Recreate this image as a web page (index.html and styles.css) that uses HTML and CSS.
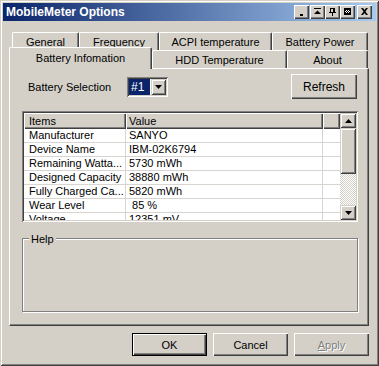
FILE: index.html
```html
<!DOCTYPE html>
<html lang="en">
<head>
  <meta charset="UTF-8">
  <title>MobileMeter Options</title>
  <link rel="stylesheet" href="styles.css">
</head>
<body>
<div class="window">
  <div class="titlebar">
    <span class="title">MobileMeter Options</span>
    <div class="caption-btns">
      <span class="cbtn"><svg width="9" height="8" viewBox="0 0 9 8"><rect x="3" y="6" width="3" height="2"/></svg></span>
      <span class="cbtn gap1"><svg width="9" height="8" viewBox="0 0 9 8"><rect x="1" y="0" width="7" height="1"/><path d="M1 6h7L4.5 2.5z"/></svg></span>
      <span class="cbtn"><svg width="9" height="8" viewBox="0 0 9 8"><path d="M2 0h5v4h-5zM3 1v3h2v-3z"/><rect x="1" y="4" width="7" height="1"/><rect x="4" y="5" width="1" height="3"/></svg></span>
      <span class="cbtn"><svg width="9" height="8" viewBox="0 0 9 8"><rect x="1" y="0" width="7" height="7"/><path d="M3 2h1v1h-1zM5 2h1v1h-1zM2 3h1v1h-1zM4 3h1v1h-1zM6 3h1v1h-1zM3 4h1v1h-1zM5 4h1v1h-1z" fill="#fff"/></svg></span>
      <span class="cbtn gap2"><svg width="9" height="8" viewBox="0 0 9 8"><path d="M1 0h2l1.5 2 1.5-2h2l-2.5 3.5 2.5 3.5h-2l-1.5-2-1.5 2h-2l2.5-3.5z"/></svg></span>
    </div>
  </div>

  <div class="client">
    <div class="tabrow back">
      <div class="tab w-general">General</div>
      <div class="tab w-freq">Frequency</div>
      <div class="tab w-acpi">ACPI temperature</div>
      <div class="tab w-power">Battery Power</div>
    </div>
    <div class="tabrow front">
      <div class="tab selected w-info">Battery Infomation</div>
      <div class="tab w-hdd">HDD Temperature</div>
      <div class="tab w-about">About</div>
    </div>

    <div class="panel">
      <div class="selrow">
        <span class="sel-label">Battery Selection</span>
        <div class="combo">
          <span class="combo-value">#1</span>
          <span class="sbtn"><svg width="7" height="4" viewBox="0 0 7 4"><path d="M0 0h7L3.5 4z"/></svg></span>
        </div>
        <button class="btn refresh">Refresh</button>
      </div>

      <div class="list">
        <div class="list-main">
          <div class="list-head">
            <div class="hcell c-items">Items</div>
            <div class="hcell c-value">Value</div>
            <div class="hcell c-fill"></div>
          </div>
          <div class="list-body">
            <div class="row"><span class="cell c-items">Manufacturer</span><span class="cell c-value">SANYO</span><span class="cell c-fill"></span></div>
            <div class="row"><span class="cell c-items">Device Name</span><span class="cell c-value">IBM-02K6794</span><span class="cell c-fill"></span></div>
            <div class="row"><span class="cell c-items">Remaining Watta...</span><span class="cell c-value">5730 mWh</span><span class="cell c-fill"></span></div>
            <div class="row"><span class="cell c-items">Designed Capacity</span><span class="cell c-value">38880 mWh</span><span class="cell c-fill"></span></div>
            <div class="row"><span class="cell c-items">Fully Charged Ca...</span><span class="cell c-value">5820 mWh</span><span class="cell c-fill"></span></div>
            <div class="row"><span class="cell c-items">Wear Level</span><span class="cell c-value"> 85 %</span><span class="cell c-fill"></span></div>
            <div class="row"><span class="cell c-items">Voltage</span><span class="cell c-value">12351 mV</span><span class="cell c-fill"></span></div>
          </div>
        </div>
        <div class="scrollbar">
          <span class="sbtn sb-end"><svg width="7" height="4" viewBox="0 0 7 4"><path d="M0 4h7L3.5 0z"/></svg></span>
          <span class="sb-thumb"></span>
          <span class="sb-track"></span>
          <span class="sbtn sb-end"><svg width="7" height="4" viewBox="0 0 7 4"><path d="M0 0h7L3.5 4z"/></svg></span>
        </div>
      </div>

      <div class="group">
        <span class="group-label">Help</span>
      </div>
    </div>

    <div class="actions">
      <button class="btn default">OK</button>
      <button class="btn">Cancel</button>
      <button class="btn disabled"><u>A</u>pply</button>
    </div>
  </div>
</div>
</body>
</html>
```

FILE: styles.css
```css
* {
  box-sizing: border-box;
}
body {
  margin: 0;
  background: #d4d0c8;
  font-family: "Liberation Sans", Arial, sans-serif;
  font-size: 11px;
  color: #000;
}
.window {
  width: 379px;
  height: 366px;
  padding: 3px;
  background: #d4d0c8;
  box-shadow: inset 1px 1px #d4d0c8, inset -1px -1px #404040,
              inset 2px 2px #fff, inset -2px -2px #808080;
}
.titlebar {
  height: 18px;
  display: flex;
  align-items: center;
  padding: 0 4px 0 3px;
  background: linear-gradient(to right, #0a246a, #a6caf0);
}
.title {
  flex: 1;
  color: #fff;
  font-weight: bold;
  font-size: 12px;
}
.caption-btns {
  display: flex;
}
.cbtn {
  width: 15px;
  height: 14px;
  display: flex;
  align-items: center;
  justify-content: center;
  background: #d4d0c8;
  box-shadow: inset 1px 1px #fff, inset -1px -1px #404040, inset -2px -2px #808080;
}
.cbtn.gap1 {
  margin-left: 1px;
}
.cbtn.gap2 {
  margin-left: 2px;
}

.client {
  padding: 11px 7px 0 6px;
}
.tabrow {
  display: flex;
  height: 18px;
}
.tabrow.back {
  padding-left: 3px;
}
.tab {
  height: 18px;
  display: flex;
  align-items: center;
  justify-content: center;
  background: #d4d0c8;
  border-top: 1px solid #fff;
  border-left: 1px solid #fff;
  border-right: 1px solid #404040;
  border-radius: 2px 2px 0 0;
  box-shadow: inset -1px 0 #808080;
  white-space: nowrap;
}
.tab.selected {
  position: relative;
  z-index: 1;
  height: 22px;
  margin-top: -3px;
  padding-bottom: 2px;
}
.w-general { width: 67px; }
.w-freq { width: 80px; }
.w-acpi { width: 113px; }
.w-power { width: 96px; }
.w-info { width: 143px; }
.w-hdd { width: 135px; }
.w-about { width: 81px; }

.panel {
  height: 258px;
  border: 1px solid;
  border-color: #fff #404040 #404040 #fff;
  box-shadow: inset -1px -1px #808080;
  padding: 5px 10px 0 12px;
}
.selrow {
  display: flex;
  align-items: center;
  height: 25px;
}
.sel-label {
  width: 105px;
  padding-left: 6px;
}
.combo {
  width: 41px;
  height: 20px;
  display: flex;
  padding: 2px;
  background: #fff;
  box-shadow: inset 1px 1px #808080, inset -1px -1px #fff,
              inset 2px 2px #404040, inset -2px -2px #d4d0c8;
}
.combo-value {
  flex: 1;
  display: flex;
  align-items: center;
  padding-left: 2px;
  margin: 0 1px 0 0;
  background: #0a246a;
  color: #fff;
  font-size: 12px;
}
.sbtn {
  width: 15px;
  display: flex;
  align-items: center;
  justify-content: center;
  background: #d4d0c8;
  box-shadow: inset 1px 1px #d4d0c8, inset -1px -1px #404040,
              inset 2px 2px #fff, inset -2px -2px #808080;
}
.btn {
  width: 75px;
  height: 23px;
  padding: 0;
  border: none;
  font: inherit;
  color: #000;
  background: #d4d0c8;
  box-shadow: inset 1px 1px #fff, inset -1px -1px #404040, inset -2px -2px #808080;
}
.btn.refresh {
  width: 66px;
  height: 25px;
  margin: 0 1px 0 auto;
  font-size: 12px;
}
.btn.default {
  border: 1px solid #000;
}
.btn.disabled {
  color: #808080;
  text-shadow: 1px 1px #fff;
}

.list {
  display: flex;
  height: 111px;
  margin-top: 12px;
  padding: 2px;
  background: #fff;
  box-shadow: inset 1px 1px #808080, inset -1px -1px #fff,
              inset 2px 2px #404040, inset -2px -2px #d4d0c8;
}
.list-main {
  flex: 1;
  overflow: hidden;
}
.list-head {
  display: flex;
  height: 16px;
}
.hcell {
  display: flex;
  align-items: center;
  padding-left: 5px;
  background: #d4d0c8;
  box-shadow: inset 1px 1px #fff, inset -1px -1px #404040, inset -2px -2px #808080;
}
.c-items { width: 102px; }
.c-value { width: 197px; }
.c-fill { flex: 1; }
.list-head .c-value {
  padding-left: 3px;
}
.row {
  display: flex;
  height: 14px;
}
.cell {
  height: 14px;
  line-height: 13px;
  border-bottom: 1px solid #d8d5d0;
  border-right: 1px solid #d8d5d0;
  white-space: pre;
  overflow: hidden;
}
.cell.c-items {
  padding-left: 5px;
}
.cell.c-value {
  padding-left: 3px;
}
.cell.c-fill {
  border-right: none;
}
.scrollbar {
  width: 16px;
  display: flex;
  flex-direction: column;
}
.sb-end {
  width: 16px;
  height: 15px;
}
.sb-thumb {
  height: 46px;
  background: #d4d0c8;
  box-shadow: inset 1px 1px #d4d0c8, inset -1px -1px #404040,
              inset 2px 2px #fff, inset -2px -2px #808080;
}
.sb-track {
  flex: 1;
  background-image: conic-gradient(#fff 25%, #d4d0c8 0 50%, #fff 0 75%, #d4d0c8 0);
  background-size: 2px 2px;
}

.group {
  position: relative;
  height: 74px;
  margin-top: 16px;
  border: 1px solid #808080;
  box-shadow: inset 1px 1px #fff, 1px 1px #fff;
}
.group-label {
  position: absolute;
  left: 6px;
  top: -6px;
  line-height: 13px;
  padding: 0 2px;
  background: #d4d0c8;
}

.actions {
  display: flex;
  justify-content: flex-end;
  gap: 6px;
  margin-top: 7px;
}
```
